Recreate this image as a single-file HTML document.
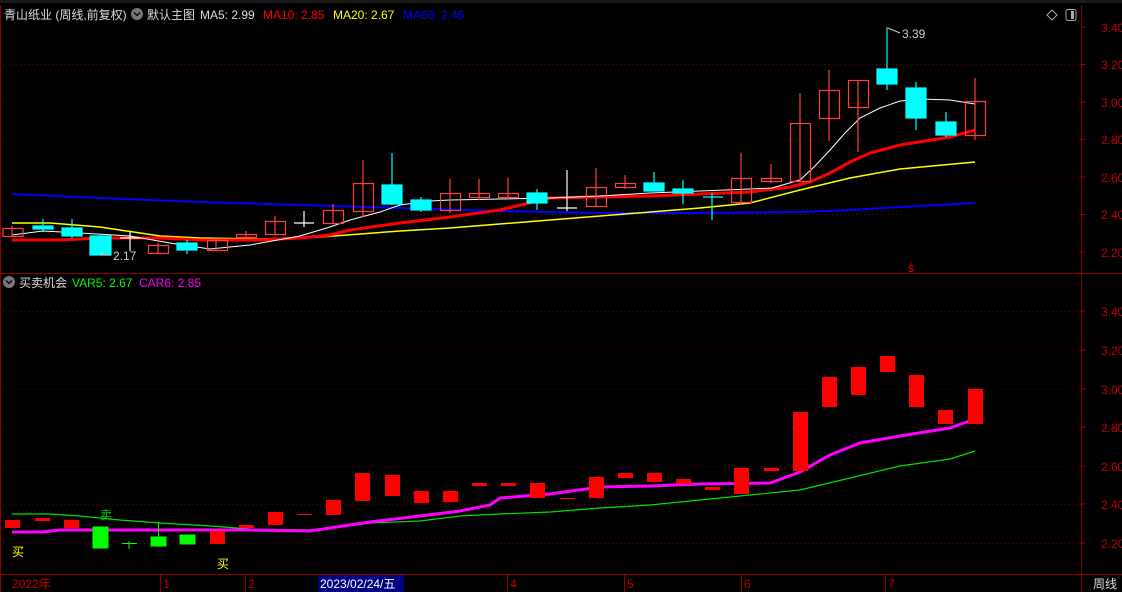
<!DOCTYPE html>
<html><head><meta charset="utf-8"><style>
html,body{margin:0;padding:0;background:#000;width:1122px;height:592px;overflow:hidden}
svg{display:block}
text{font-family:"Liberation Sans","Noto Sans CJK SC",sans-serif;font-size:12px}
</style></head><body>
<svg width="1122" height="592" viewBox="0 0 1122 592" xmlns="http://www.w3.org/2000/svg">
<rect width="1122" height="592" fill="#000"/>
<rect x="0" y="0" width="1122" height="3" fill="#1a1a1a"/>
<g stroke="#7a0000" stroke-dasharray="1,3" stroke-width="1">
<line x1="0" y1="64.5" x2="1081" y2="64.5"/><line x1="0" y1="102.5" x2="1081" y2="102.5"/><line x1="0" y1="139.5" x2="1081" y2="139.5"/><line x1="0" y1="177.5" x2="1081" y2="177.5"/><line x1="0" y1="214.5" x2="1081" y2="214.5"/><line x1="0" y1="252.5" x2="1081" y2="252.5"/>
<line x1="0" y1="311.5" x2="1081" y2="311.5"/><line x1="0" y1="350.5" x2="1081" y2="350.5"/><line x1="0" y1="389.5" x2="1081" y2="389.5"/><line x1="0" y1="427.5" x2="1081" y2="427.5"/><line x1="0" y1="466.5" x2="1081" y2="466.5"/><line x1="0" y1="504.5" x2="1081" y2="504.5"/><line x1="0" y1="543.5" x2="1081" y2="543.5"/>
</g>
<g stroke="#8b0000" stroke-width="1" fill="none">
<line x1="0" y1="273.5" x2="1122" y2="273.5"/>
<line x1="0" y1="574.5" x2="1122" y2="574.5"/>
<line x1="1081.5" y1="5" x2="1081.5" y2="592"/>
<line x1="0.5" y1="5" x2="0.5" y2="592"/>
</g>
<g stroke="#8b0000">
<line x1="1081" y1="27" x2="1086" y2="27"/><line x1="1081" y1="64.5" x2="1086" y2="64.5"/><line x1="1081" y1="102" x2="1086" y2="102"/><line x1="1081" y1="139.5" x2="1086" y2="139.5"/><line x1="1081" y1="177" x2="1086" y2="177"/><line x1="1081" y1="214.5" x2="1086" y2="214.5"/><line x1="1081" y1="252" x2="1086" y2="252"/>
<line x1="1081" y1="311" x2="1086" y2="311"/><line x1="1081" y1="350" x2="1086" y2="350"/><line x1="1081" y1="389" x2="1086" y2="389"/><line x1="1081" y1="427" x2="1086" y2="427"/><line x1="1081" y1="466" x2="1086" y2="466"/><line x1="1081" y1="504" x2="1086" y2="504"/><line x1="1081" y1="543" x2="1086" y2="543"/>
<line x1="160.5" y1="575" x2="160.5" y2="592"/><line x1="245.5" y1="575" x2="245.5" y2="592"/><line x1="318.5" y1="575" x2="318.5" y2="592"/><line x1="507.5" y1="575" x2="507.5" y2="592"/><line x1="624.5" y1="575" x2="624.5" y2="592"/><line x1="741.5" y1="575" x2="741.5" y2="592"/><line x1="885.5" y1="575" x2="885.5" y2="592"/>
</g>
<g fill="#c00000">
<text x="1101" y="32">3.40</text><text x="1101" y="69">3.20</text><text x="1101" y="107">3.00</text><text x="1101" y="144">2.80</text><text x="1101" y="182">2.60</text><text x="1101" y="219">2.40</text><text x="1101" y="257">2.20</text>
<text x="1101" y="316">3.40</text><text x="1101" y="355">3.20</text><text x="1101" y="394">3.00</text><text x="1101" y="432">2.80</text><text x="1101" y="471">2.60</text><text x="1101" y="509">2.40</text><text x="1101" y="548">2.20</text>
<text x="12" y="588">2022年</text><text x="163" y="588">1</text><text x="248" y="588">2</text><text x="510" y="588">4</text><text x="627" y="588">5</text><text x="744" y="588">6</text><text x="888" y="588">7</text>
</g>
<rect x="318" y="575" width="86" height="17" fill="#000080"/>
<text x="320" y="588" fill="#fff">2023/02/24/五</text>
<text x="1093" y="588" fill="#ddd">周线</text>
<text x="4" y="19" fill="#ddd">青山纸业 (周线,前复权)</text>
<circle cx="137" cy="14" r="6" fill="#777"/><path d="M134 12.5 L137 15.5 L140 12.5" stroke="#000" stroke-width="1.3" fill="none"/>
<text x="147" y="19" fill="#ddd">默认主图</text>
<text x="200" y="19" fill="#ddd">MA5: 2.99</text>
<text x="263" y="19" fill="#f00">MA10: 2.85</text>
<text x="333" y="19" fill="#ff0">MA20: 2.67</text>
<text x="403" y="19" fill="#00f">MA60: 2.46</text>
<path d="M1052 10 L1057 15 L1052 20 L1047 15 Z" stroke="#aaa" fill="none"/>
<rect x="1066" y="9.5" width="10" height="11" rx="2" stroke="#aaa" fill="none"/><rect x="1071" y="11" width="3" height="8" fill="#aaa"/>
<circle cx="9" cy="282" r="6" fill="#777"/><path d="M6 280.5 L9 283.5 L12 280.5" stroke="#000" stroke-width="1.3" fill="none"/>
<text x="19" y="287" fill="#ddd">买卖机会</text>
<text x="72" y="287" fill="#0f0">VAR5: 2.67</text>
<text x="139" y="287" fill="#f0f">CAR6: 2.85</text>
<polyline fill="none" stroke="#0000ff" stroke-width="2" points="12,194 100,198 200,202 300,205 400,208 500,211 600,213 700,213 800,212 850,210 900,207 975,203"/>
<polyline fill="none" stroke="#ffff00" stroke-width="1.5" points="12,223 50,223 100,227 160,236 200,238 260,239 320,237 400,231 450,228 550,220 650,212 700,208 750,203 800,190 850,178 900,169 975,162"/>
<polyline fill="none" stroke="#ff0000" stroke-width="3" points="12,240 60,240 100,238 160,238 200,240 260,240 300,238 330,235 350,230 400,223 450,217 500,210 550,198 650,196 700,194 750,192 790,187 810,182 830,173 850,162 870,153 900,145 950,137 975,130"/>
<polyline fill="none" stroke="#ffffff" stroke-width="1" points="12,235 43,231 80,233 130,236 170,243 210,249 250,245 300,236 330,227 350,220 380,212 400,205 430,201 450,200 500,199 550,198 600,196 650,193 700,191 750,189 772,188 800,180 815,166 830,150 845,133 860,118 880,108 900,101 920,99 950,100 975,104"/>
<g stroke="#ff4040" fill="none" stroke-width="1.2">
<line x1="12" y1="226" x2="12" y2="237"/><rect x="3" y="228.5" width="20" height="8"/>
<line x1="158" y1="243" x2="158" y2="254"/><rect x="148.5" y="245.5" width="20" height="8"/>
<line x1="216" y1="238" x2="216" y2="251"/><rect x="207.5" y="240.5" width="20" height="10"/>
<line x1="246" y1="231" x2="246" y2="237"/><rect x="236.5" y="234.5" width="20" height="3"/>
<line x1="275" y1="216" x2="275" y2="235"/><rect x="265.5" y="221.5" width="20" height="13"/>
<line x1="333" y1="204" x2="333" y2="223"/><rect x="323.5" y="210.5" width="20" height="13"/>
<line x1="363" y1="160" x2="363" y2="217"/><rect x="353.5" y="183.5" width="20" height="28"/>
<line x1="450" y1="179" x2="450" y2="213"/><rect x="440.5" y="193.5" width="20" height="17"/>
<line x1="479" y1="179" x2="479" y2="200"/><rect x="469.5" y="193.5" width="20" height="4"/>
<line x1="508" y1="178" x2="508" y2="199"/><rect x="498.5" y="193.5" width="20" height="4"/>
<line x1="596" y1="168" x2="596" y2="207"/><rect x="586.5" y="187.5" width="20" height="19"/>
<line x1="625" y1="175" x2="625" y2="189"/><rect x="615.5" y="183.5" width="20" height="4"/>
<line x1="741" y1="153" x2="741" y2="204"/><rect x="731.5" y="178.5" width="20" height="24"/>
<line x1="771" y1="164" x2="771" y2="183"/><rect x="761.5" y="178.5" width="20" height="3"/>
<line x1="800" y1="93" x2="800" y2="181"/><rect x="790.5" y="123.5" width="20" height="58"/>
<line x1="829" y1="70" x2="829" y2="141"/><rect x="819.5" y="90.5" width="20" height="28"/>
<line x1="858" y1="80" x2="858" y2="152"/><rect x="848.5" y="80.5" width="20" height="27"/>
<line x1="975" y1="78" x2="975" y2="140"/><rect x="965.5" y="101.5" width="20" height="34"/>
</g>
<g stroke="#00ffff" fill="#00ffff" stroke-width="1.2">
<line x1="43" y1="219" x2="43" y2="232"/><rect x="33" y="226" width="20" height="3"/>
<line x1="72" y1="219" x2="72" y2="238"/><rect x="62" y="228" width="20" height="8"/>
<line x1="100" y1="234" x2="100" y2="255"/><rect x="90" y="236" width="21" height="19"/>
<line x1="187" y1="240" x2="187" y2="254"/><rect x="177" y="243" width="20" height="7"/>
<line x1="392" y1="153" x2="392" y2="205"/><rect x="382" y="185" width="20" height="19"/>
<line x1="421" y1="197" x2="421" y2="212"/><rect x="411" y="200" width="20" height="10"/>
<line x1="537" y1="189" x2="537" y2="210"/><rect x="527" y="193" width="20" height="10"/>
<line x1="654" y1="172" x2="654" y2="191"/><rect x="644" y="183" width="20" height="8"/>
<line x1="683" y1="180" x2="683" y2="204"/><rect x="673" y="189" width="20" height="4"/>
<line x1="712" y1="193" x2="712" y2="220"/><line x1="703" y1="197" x2="723" y2="197"/>
<line x1="887" y1="27" x2="887" y2="90"/><rect x="877" y="69" width="20" height="15"/>
<line x1="916" y1="82" x2="916" y2="130"/><rect x="906" y="88" width="20" height="30"/>
<line x1="946" y1="112" x2="946" y2="137"/><rect x="936" y="122" width="20" height="13"/>
</g>
<g stroke="#fff" stroke-width="1.2">
<line x1="130" y1="232" x2="130" y2="251"/><line x1="120" y1="238" x2="140" y2="238"/>
<line x1="304" y1="211" x2="304" y2="227"/><line x1="294" y1="223" x2="314" y2="223"/>
<line x1="567" y1="170" x2="567" y2="211"/><line x1="557" y1="208" x2="577" y2="208"/>
</g>
<text x="113" y="260" fill="#ccc">2.17</text><path d="M110 255 L100 255 M103 252 L100 255" stroke="#ccc" fill="none"/>
<text x="902" y="38" fill="#ccc">3.39</text><path d="M888 28 L900 33" stroke="#ccc"/>
<text x="908" y="272" fill="#f00" font-size="12">ŝ</text>
<polyline fill="none" stroke="#00e000" stroke-width="1.2" points="12,514 50,514 80,516 120,520 160,523 210,526 250,529 310,530 330,528 370,523 420,521 460,516 500,514 550,512 600,508 650,505 700,500 750,495 800,490 850,478 900,466 950,459 975,451"/>
<polyline fill="none" stroke="#ff00ff" stroke-width="3" points="12,532 42,532 60,530 190,530 250,530 310,531 330,528 370,522 420,516 460,511 490,505 500,498 550,494 600,487 650,486 700,484 770,483 800,472 830,455 860,443 900,436 950,428 975,419"/>
<g fill="#ff0000">
<rect x="5" y="520" width="15" height="8"/><rect x="35" y="518" width="15" height="3"/><rect x="64" y="520" width="15" height="8"/>
<rect x="210" y="531" width="15" height="13"/><rect x="239" y="525" width="15" height="3"/><rect x="268" y="512" width="15" height="13"/><rect x="297" y="514" width="15" height="1"/>
<rect x="326" y="500" width="15" height="15"/><rect x="355" y="473" width="15" height="28"/><rect x="385" y="475" width="15" height="21"/><rect x="414" y="491" width="15" height="12"/><rect x="443" y="491" width="15" height="11"/>
<rect x="472" y="483" width="15" height="3"/><rect x="501" y="483" width="15" height="3"/><rect x="530" y="483" width="15" height="15"/><rect x="560" y="498" width="15" height="1"/><rect x="589" y="477" width="15" height="21"/>
<rect x="618" y="473" width="15" height="5"/><rect x="647" y="473" width="15" height="9"/><rect x="676" y="479" width="15" height="5"/><rect x="705" y="487" width="15" height="3"/>
<rect x="734" y="468" width="15" height="26"/><rect x="764" y="468" width="15" height="3"/><rect x="793" y="412" width="15" height="59"/><rect x="822" y="377" width="15" height="30"/>
<rect x="851" y="367" width="15" height="28"/><rect x="880" y="356" width="15" height="16"/><rect x="909" y="375" width="15" height="32"/><rect x="938" y="410" width="15" height="14"/><rect x="968" y="389" width="15" height="35"/>
</g>
<g fill="#00ff00" stroke="#00ff00">
<rect x="93" y="527" width="15" height="21"/>
<line x1="129" y1="541" x2="129" y2="549"/><line x1="122" y1="543.5" x2="137" y2="543.5"/>
<line x1="158.5" y1="522" x2="158.5" y2="547"/><rect x="151" y="537" width="15" height="9"/>
<rect x="180" y="535" width="15" height="9"/>
</g>
<text x="12" y="556" fill="#ff0">买</text>
<text x="217" y="568" fill="#ff0">买</text>
<text x="100" y="519" fill="#0c0">卖</text>
</svg>
</body></html>
